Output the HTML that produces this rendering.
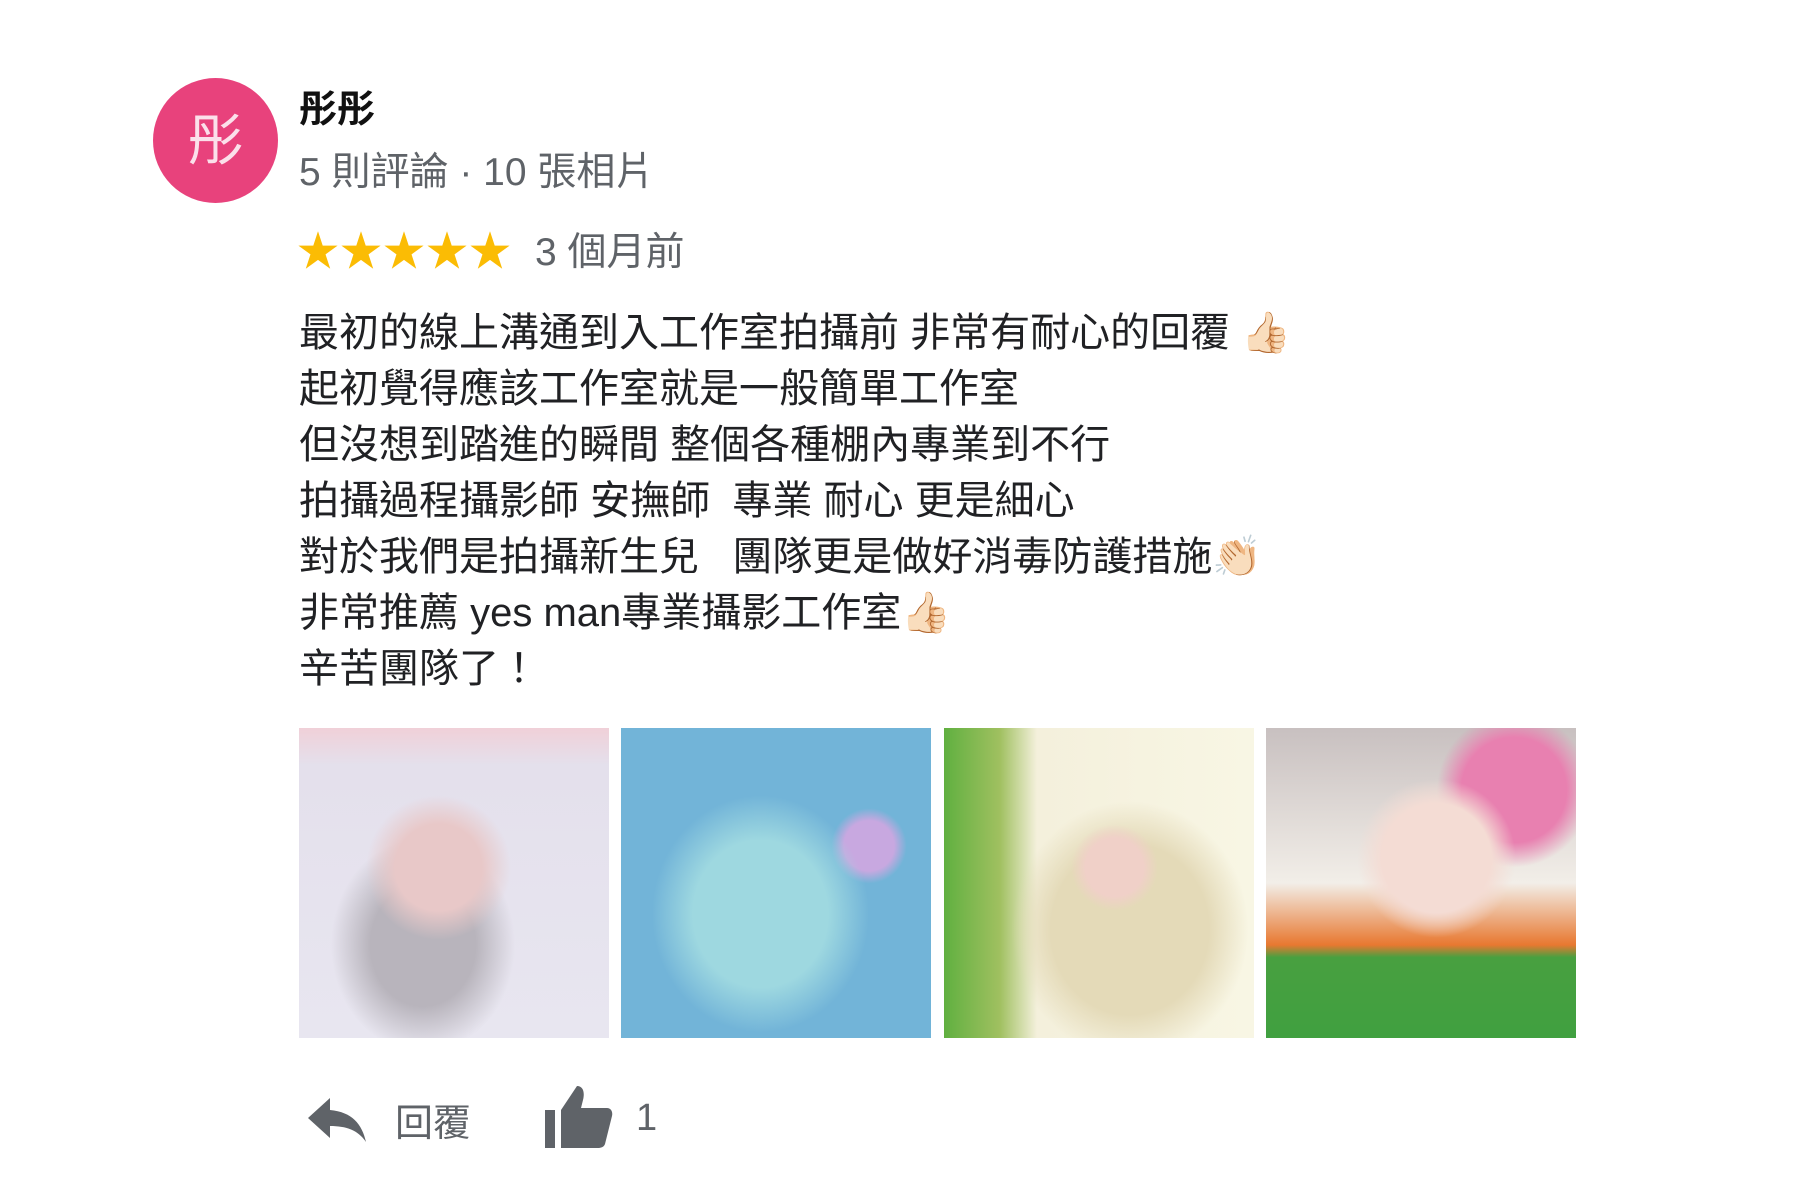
<!DOCTYPE html>
<html><head><meta charset="utf-8"><style>
body{margin:0;width:1800px;height:1200px;background:#fff;position:relative;overflow:hidden;font-family:"Liberation Sans","Noto Sans CJK TC",sans-serif}
.a{position:absolute}
.av{left:153px;top:78px;width:125px;height:125px;border-radius:50%;background:#e8427c;color:#fbe0ea;font-size:56px;line-height:125px;text-align:center}
.name{left:299px;top:78px;font-size:38px;font-weight:bold;color:#111}
.sub{left:299px;top:141px;font-size:39px;color:#5f6368}
.stars{left:297px;top:218px;font-size:42px;color:#fbbc04;letter-spacing:1px}
.ago{left:535px;top:221px;font-size:39px;color:#5f6368}
.txt{left:299px;top:305px;font-size:40px;line-height:56px;color:#202124;white-space:pre}
.img{top:728px;width:310px;height:310px}
.act{top:1092px;font-size:38px;color:#5f6368}
</style></head><body>
<div class="a av">彤</div>
<div class="a name">彤彤</div>
<div class="a sub">5 則評論 · 10 張相片</div>
<div class="a stars">★★★★★</div>
<div class="a ago">3 個月前</div>
<div class="a txt">最初的線上溝通到入工作室拍攝前 非常有耐心的回覆 👍🏻
起初覺得應該工作室就是一般簡單工作室
但沒想到踏進的瞬間 整個各種棚內專業到不行
拍攝過程攝影師 安撫師  專業 耐心 更是細心
對於我們是拍攝新生兒   團隊更是做好消毒防護措施👏🏻
非常推薦 yes man專業攝影工作室👍🏻
辛苦團隊了！</div>
<div class="a img" style="left:299px;background:radial-gradient(circle at 45% 45%,#e8c8c8 0 18%,transparent 30%),radial-gradient(ellipse at 40% 70%,#b8b4bc 0 20%,transparent 35%),linear-gradient(180deg,#f0d0d8 0,#e4e0ec 12%,#e8e6f0 100%)"></div>
<div class="a img" style="left:621px;background:radial-gradient(ellipse at 45% 60%,#9ed8e0 0 28%,transparent 45%),radial-gradient(circle at 80% 38%,#c8a8e0 0 8%,transparent 12%),#72b4d8"></div>
<div class="a img" style="left:944px;background:radial-gradient(circle at 55% 45%,#f0d0c8 0 12%,transparent 18%),radial-gradient(ellipse at 60% 65%,#e4dab8 0 30%,transparent 45%),linear-gradient(90deg,#60b040 0,#a0c060 18%,#f4f0dc 30%,#f8f6e4 100%)"></div>
<div class="a img" style="left:1266px;background:radial-gradient(circle at 55% 42%,#f4dcd4 0 22%,transparent 32%),radial-gradient(circle at 80% 20%,#e880b0 0 15%,transparent 22%),linear-gradient(180deg,#c8c0c0 0,#f2eee8 50%,#e87830 70%,#48a040 74%,#40a040 100%)"></div>
<svg class="a" style="left:306px;top:1096px" width="62" height="48" viewBox="0 0 62 48"><path d="M24 2 L2 22 L24 42 L24 30 C40 30 52 34 60 46 C56 28 46 16 24 14 Z" fill="#5f6368"/></svg>
<div class="a act" style="left:395px">回覆</div>
<svg class="a" style="left:543px;top:1084px" width="72" height="66" viewBox="0 0 72 66"><rect x="2" y="26" width="10" height="38" fill="#5f6368"/><path d="M18 26 L34 2 C40 2 42 8 40 16 L38 24 L64 24 C68 24 70 28 69 32 L62 60 C61 63 58 64 55 64 L18 64 Z" fill="#5f6368"/></svg>
<div class="a act" style="left:636px;top:1097px">1</div>
</body></html>
